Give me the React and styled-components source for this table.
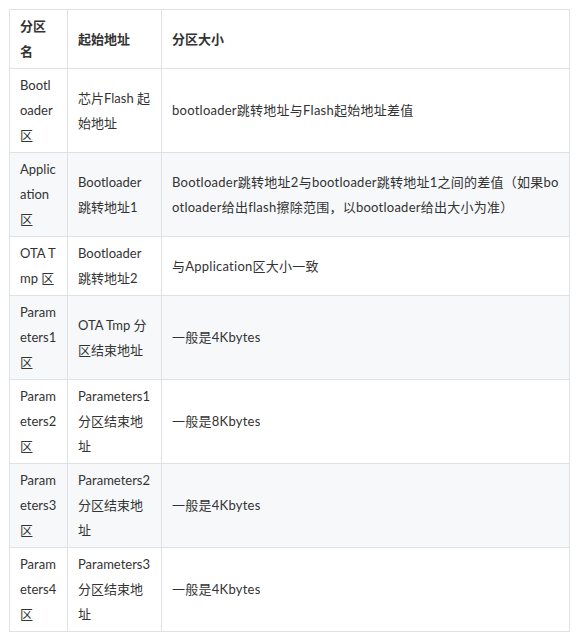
import React from "react";
import styled, { createGlobalStyle } from "styled-components";

const Global = createGlobalStyle`
  html, body { margin: 0; padding: 0; background: #fff; }
  body {
    font-family: Lato, "Noto Sans CJK SC", sans-serif;
    color: #333;
  }
`;

const Page = styled.div`
  padding: 9px 0 0 9px;
`;

const Table = styled.table`
  border-collapse: collapse;
  table-layout: fixed;
  width: 560px;
  font-size: 13px;
  line-height: 25px;
`;

const Col = styled.col`
  width: ${(p) => p.$w}px;
`;

const Row = styled.tr`
  background: ${(p) => (p.$alt ? "#f6f8fa" : "#fff")};
`;

const Th = styled.th`
  border: 1px solid #dfe2e5;
  padding: 4px 10px;
  text-align: left;
  vertical-align: middle;
  font-weight: 700;
  color: #333;
  word-break: break-all;
`;

const Td = styled.td`
  border: 1px solid #dfe2e5;
  padding: 4px 10px;
  text-align: left;
  vertical-align: middle;
  color: #333;
  word-break: break-all;
  letter-spacing: ${(p) => (p.$spaced ? "0.25px" : "0")};
`;

const rows = [
  ["Bootloader区", "芯片Flash 起始地址", "bootloader跳转地址与Flash起始地址差值"],
  [
    "Application区",
    "Bootloader跳转地址1",
    "Bootloader跳转地址2与bootloader跳转地址1之间的差值（如果bootloader给出flash擦除范围，以bootloader给出大小为准）",
  ],
  ["OTA Tmp 区", "Bootloader跳转地址2", "与Application区大小一致"],
  ["Parameters1区", "OTA Tmp 分区结束地址", "一般是4Kbytes"],
  ["Parameters2区", "Parameters1分区结束地址", "一般是8Kbytes"],
  ["Parameters3区", "Parameters2分区结束地址", "一般是4Kbytes"],
  ["Parameters4区", "Parameters3分区结束地址", "一般是4Kbytes"],
];

export default function App() {
  return (
    <Page>
      <Global />
      <Table>
        <colgroup>
          <Col $w={58} />
          <Col $w={94} />
          <Col $w={408} />
        </colgroup>
        <thead>
          <Row>
            <Th>分区名</Th>
            <Th>起始地址</Th>
            <Th>分区大小</Th>
          </Row>
        </thead>
        <tbody>
          {rows.map((r, i) => (
            <Row key={i} $alt={i % 2 === 1}>
              <Td>{r[0]}</Td>
              <Td>{r[1]}</Td>
              <Td $spaced>{r[2]}</Td>
            </Row>
          ))}
        </tbody>
      </Table>
    </Page>
  );
}
